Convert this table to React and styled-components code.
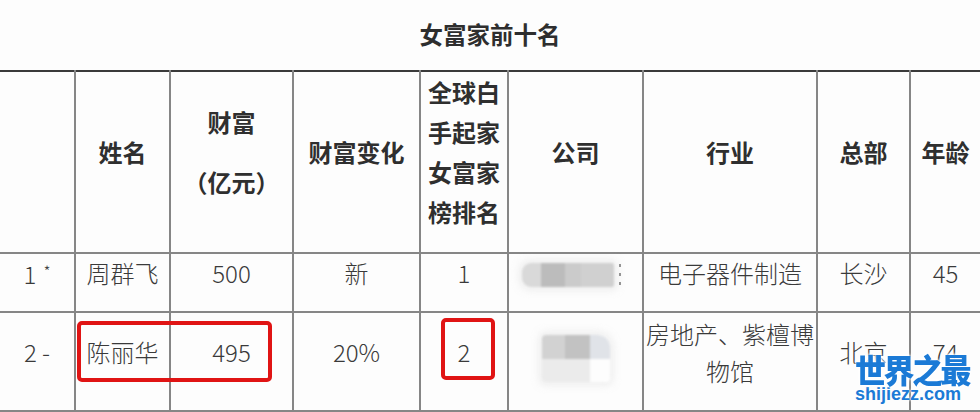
import React from "react";
import styled, { createGlobalStyle } from "styled-components";

const Global = createGlobalStyle`
  html, body { margin: 0; padding: 0; background: #fdfdfd; }
  body { font-family: "Noto Sans CJK SC", "Noto Sans", sans-serif; color: #333; }
`;

const Page = styled.div`
  position: relative;
  width: 980px;
  height: 412px;
  overflow: hidden;
  background: #fdfdfd;
`;

const Title = styled.div`
  height: 70px;
  display: flex;
  align-items: center;
  justify-content: center;
  padding-bottom: 2px;
  font-size: 23.5px;
  font-weight: 700;
  color: #2e2e2e;
  box-sizing: border-box;
`;

const Table = styled.table`
  width: 980px;
  table-layout: fixed;
  border-collapse: collapse;
  border-top: 2px solid #3a3a3a;
`;

const HeadRow = styled.tr`
  height: ${(p) => p.$h}px;
`;

const Row = styled.tr`
  height: ${(p) => p.$h}px;
`;

const cellBase = `
  border: 2px solid #868686;
  text-align: center;
  vertical-align: middle;
  padding: 0 0 20px 0;
  font-size: 24px;
  &:first-child { border-left: none; }
  &:last-child { border-right: none; }
`;

const Th = styled.th`
  ${cellBase}
  border-top: 2px solid #3a3a3a;
  font-weight: 700;
  color: #2f2f2f;
  line-height: 40px;
`;

const Td = styled.td`
  ${cellBase}
  font-weight: 300;
  color: #3a3a3a;
  line-height: ${(p) => p.$lh || 34}px;
`;

const Stack = styled.div`
  display: flex;
  flex-direction: column;
  align-items: center;
  gap: ${(p) => p.$gap || 0}px;
`;

const Star = styled.span`
  font-size: 16px;
  vertical-align: 6px;
  margin-left: 7px;
`;

const RedactRow = styled.div`
  display: flex;
  align-items: center;
  justify-content: center;
  gap: 5px;
  margin-right: ${(p) => p.$mr || 0}px;
  margin-top: ${(p) => p.$mt || 0}px;
`;

const Blob = styled.div`
  display: grid;
  grid-template-columns: ${(p) => p.$cols};
  grid-template-rows: ${(p) => p.$rows};
  border-radius: ${(p) => p.$radius};
  overflow: hidden;
  filter: blur(0.8px);
  box-shadow: 0 0 6px 4px rgba(230, 230, 230, 0.5);
`;

const Seg = styled.div`
  background: ${(p) => p.$c};
  border-radius: ${(p) => p.$r || "0"};
`;

const Dots = styled.div`
  display: flex;
  flex-direction: column;
  gap: 6px;
  span {
    width: 2px;
    height: 3px;
    background: #6a6a6a;
    opacity: 0.7;
  }
`;

const Highlight = styled.div`
  position: absolute;
  left: ${(p) => p.$x}px;
  top: ${(p) => p.$y}px;
  width: ${(p) => p.$w}px;
  height: ${(p) => p.$h}px;
  box-sizing: border-box;
  border: 4px solid #e01414;
  border-radius: 5px;
  pointer-events: none;
`;

const Watermark = styled.div`
  position: absolute;
  left: 855px;
  top: 349px;
  display: flex;
  flex-direction: column;
  align-items: flex-start;
  color: #1b7ad6;
`;

const WmTitle = styled.div`
  font-family: "Noto Sans CJK SC", sans-serif;
  font-size: 31px;
  font-weight: 900;
  line-height: 40px;
  letter-spacing: -2.5px;
  transform: scaleY(1.08);
  text-shadow: 0 0 2px #fff, 0 0 3px #fff, 0 0 4px #fff;
`;

const WmUrl = styled.div`
  font-family: "Liberation Sans", Arial, sans-serif;
  font-size: 18px;
  font-weight: 700;
  line-height: 20px;
  margin-top: -5px;
  text-shadow: 0 0 2px #fff, 0 0 3px #fff;
`;

const cols = [75, 95, 123, 127, 88, 135, 174, 93, 70];

export default function App() {
  return (
    <Page>
      <Global />
      <Title>女富家前十名</Title>
      <Table>
        <colgroup>
          {cols.map((w, i) => (
            <col key={i} style={{ width: w }} />
          ))}
        </colgroup>
        <thead>
          <HeadRow $h={181}>
            <Th></Th>
            <Th>姓名</Th>
            <Th>
              <Stack $gap={20}>
                <span>财富</span>
                <span>（亿元）</span>
              </Stack>
            </Th>
            <Th>财富变化</Th>
            <Th>
              <Stack>
                <span>全球白</span>
                <span>手起家</span>
                <span>女富家</span>
                <span>榜排名</span>
              </Stack>
            </Th>
            <Th>公司</Th>
            <Th>行业</Th>
            <Th>总部</Th>
            <Th>年龄</Th>
          </HeadRow>
        </thead>
        <tbody>
          <Row $h={59}>
            <Td>
              1<Star>*</Star>
            </Td>
            <Td>周群飞</Td>
            <Td>500</Td>
            <Td>新</Td>
            <Td>1</Td>
            <Td>
              <RedactRow $mr={8} $mt={4}>
                <Blob $cols="19px 24px 16px 33px" $rows="24px" $radius="9px 2px 2px 9px">
                  <Seg $c="#d9d9d9" />
                  <Seg $c="#bcbcbc" />
                  <Seg $c="#cbcbcb" />
                  <Seg $c="#d0d0d0" />
                </Blob>
                <Dots>
                  <span />
                  <span />
                  <span />
                </Dots>
              </RedactRow>
            </Td>
            <Td>电子器件制造</Td>
            <Td>长沙</Td>
            <Td>45</Td>
          </Row>
          <Row $h={99}>
            <Td>2 -</Td>
            <Td>陈丽华</Td>
            <Td>495</Td>
            <Td>20%</Td>
            <Td>2</Td>
            <Td>
              <RedactRow $mt={14}>
                <Blob $cols="23px 25px 20px" $rows="24px 23px" $radius="4px 12px 4px 4px">
                  <Seg $c="#d2d2d2" />
                  <Seg $c="#c2c2c2" />
                  <Seg $c="#e0e3e8" $r="0 12px 0 0" />
                  <Seg $c="#ebebeb" />
                  <Seg $c="#ebebeb" />
                  <Seg $c="#fdfdfd" />
                </Blob>
              </RedactRow>
            </Td>
            <Td $lh={37}>
              房地产、紫檀博
              <br />
              物馆
            </Td>
            <Td>北京</Td>
            <Td>74</Td>
          </Row>
          <Row $h={40}>
            <Td></Td>
            <Td></Td>
            <Td></Td>
            <Td></Td>
            <Td></Td>
            <Td></Td>
            <Td></Td>
            <Td></Td>
            <Td></Td>
          </Row>
        </tbody>
      </Table>
      <Highlight $x={77} $y={321} $w={195} $h={61} />
      <Highlight $x={441} $y={318} $w={54} $h={62} />
      <Watermark>
        <WmTitle>世界之最</WmTitle>
        <WmUrl>shijiezz.com</WmUrl>
      </Watermark>
    </Page>
  );
}
